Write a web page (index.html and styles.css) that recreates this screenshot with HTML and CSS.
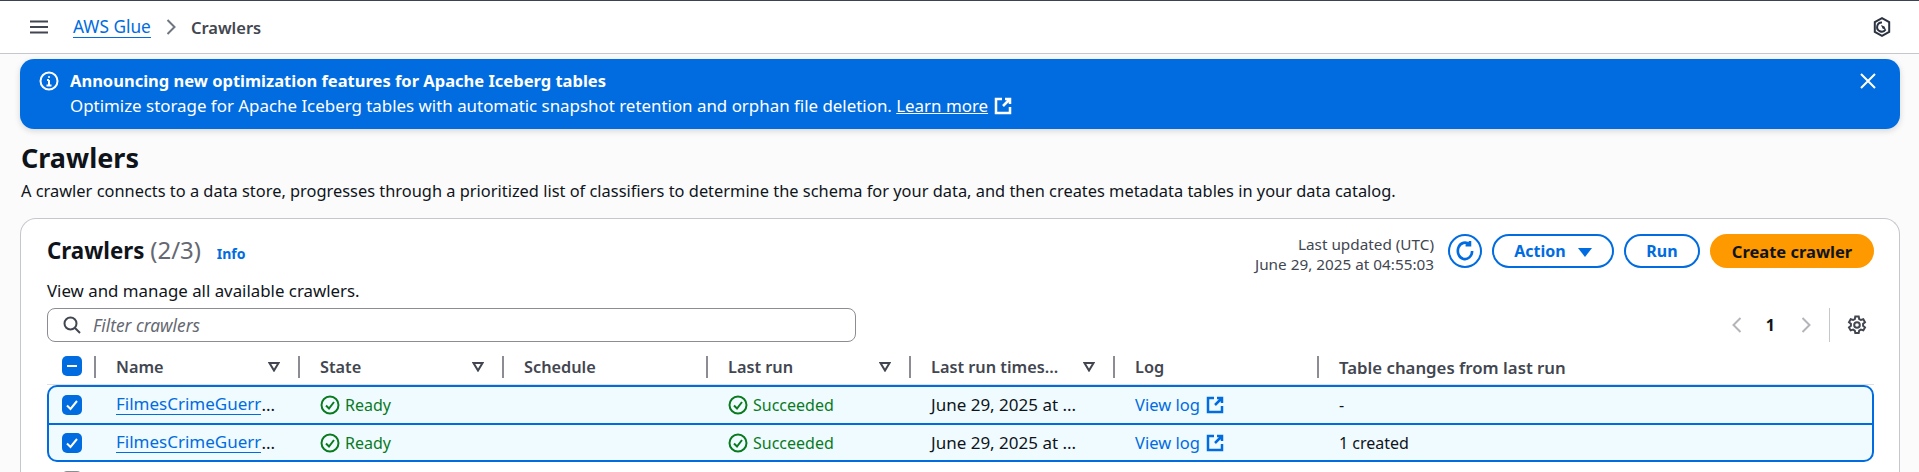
FILE: index.html
```html
<!DOCTYPE html>
<html>
<head>
    <title>Crawlers</title>
    <link rel="stylesheet" href="styles.css">
</head>
<body>
    <header class="topbar">
        <svg class="menu-icon" viewBox="0 0 18 14"><path d="M0 1.5h18M0 7h18M0 12.5h18"/></svg>
        <a class="crumb-link" href="#">AWS Glue</a>
        <svg class="crumb-sep" viewBox="0 0 10 16"><path d="M1.5 1l7 7-7 7"/></svg>
        <span class="crumb-current">Crawlers</span>
        <svg class="hex-icon" viewBox="0 0 18 20">
            <path class="hex-line" d="M9 1.2l7.2 4v9.6L9 18.8l-7.200-4V5.200z"/>
            <path class="hex-line" d="M12.600 12.500A4.600 4.600 0 1 1 9 5.400"/>
            <path class="hex-fill" d="M8 8l3.500 1.500 1.500 3.500-3.500-1.500z"/>
        </svg>
    </header>

    <div class="banner">
        <svg class="info-icon" viewBox="0 0 20 20">
            <circle cx="10" cy="10" r="8.500"/>
            <path d="M10 9v5.500M7.500 14.500h5M8 9h2"/>
            <path d="M10 5.200v1.600"/>
        </svg>
        <div class="banner-text">
            <div class="banner-title">Announcing new optimization features for Apache Iceberg tables</div>
            <div class="banner-body">Optimize storage for Apache Iceberg tables with automatic snapshot retention and orphan file deletion. <a href="#">Learn more</a>
                <svg class="ext-icon ext-white" viewBox="0 0 18 18"><path d="M8 2H2v14h14v-6M11 2h5v5M16 2l-7 7"/></svg>
            </div>
        </div>
        <svg class="close-icon" viewBox="0 0 16 16"><path d="M1 1l14 14M15 1L1 15"/></svg>
    </div>

    <h1 class="page-title">Crawlers</h1>
    <p class="page-desc">A crawler connects to a data store, progresses through a prioritized list of classifiers to determine the schema for your data, and then creates metadata tables in your data catalog.</p>

    <section class="card">
        <div class="card-head">
            <div>
                <h2 class="card-title">Crawlers <span class="count">(2/3)</span> <a class="info-link" href="#">Info</a></h2>
                <div class="card-sub">View and manage all available crawlers.</div>
            </div>
            <div class="actions">
                <div class="updated">Last updated (UTC)<br>June 29, 2025 at 04:55:03</div>
                <button class="btn btn-round" type="button">
                    <svg viewBox="0 0 20 20"><path d="M16.500 10a6.500 7.500 0 1 1-2.500-6M14.500 0.800v4h-4"/></svg>
                </button>
                <button class="btn btn-action" type="button">Action <span class="caret"></span></button>
                <button class="btn btn-run" type="button">Run</button>
                <button class="btn btn-primary" type="button">Create crawler</button>
            </div>
        </div>

        <div class="tools">
            <div class="filter">
                <svg viewBox="0 0 18 18"><circle cx="7.500" cy="7.500" r="6"/><path d="M12 12l5 5"/></svg>
                <span>Filter crawlers</span>
            </div>
            <div class="pager">
                <svg class="pager-arrow" viewBox="0 0 10 16"><path d="M8.500 1l-7 7 7 7"/></svg>
                <span class="page-num">1</span>
                <svg class="pager-arrow" viewBox="0 0 10 16"><path d="M1.500 1l7 7-7 7"/></svg>
                <span class="pager-sep"></span>
                <svg class="gear" viewBox="0 0 20 20">
                    <path d="M8.300 1.500h3.400l.5 2.500 1.700 1 2.400-.8 1.700 3-1.900 1.600v2l1.900 1.600-1.700 3-2.400-.8-1.700 1-.5 2.500H8.300l-.5-2.500-1.700-1-2.400.8-1.700-3 1.900-1.600v-2L2 7.200l1.700-3 2.400.8 1.700-1z"/>
                    <circle cx="10" cy="10" r="2.800"/>
                </svg>
            </div>
        </div>

        <div class="table-head row-grid">
            <div class="cell-check"><span class="check check-on"><svg viewBox="0 0 20 20"><path class="dash" d="M5 10h10"/></svg></span></div>
            <div class="th">Name <svg class="sort" viewBox="0 0 12 10"><path d="M1.500 1h9L6 8.500z"/></svg></div>
            <div class="th">State <svg class="sort" viewBox="0 0 12 10"><path d="M1.500 1h9L6 8.500z"/></svg></div>
            <div class="th">Schedule</div>
            <div class="th">Last run <svg class="sort" viewBox="0 0 12 10"><path d="M1.500 1h9L6 8.500z"/></svg></div>
            <div class="th">Last run times... <svg class="sort" viewBox="0 0 12 10"><path d="M1.500 1h9L6 8.500z"/></svg></div>
            <div class="th">Log</div>
            <div class="th th-wide">Table changes from last run</div>
        </div>

        <div class="selected">
            <div class="row row-grid">
                <div class="cell-check"><span class="check check-on"><svg viewBox="0 0 20 20"><path d="M5 10.500l3.500 3.500L15 6"/></svg></span></div>
                <div class="td td-long"><a class="name-link" href="#">FilmesCrimeGuerr</a>...</div>
                <div class="td ok"><svg class="ok-icon" viewBox="0 0 20 20"><circle cx="10" cy="10" r="8.500"/><path d="M6 10.500l3 3 5-6.500"/></svg>Ready</div>
                <div class="td"></div>
                <div class="td ok"><svg class="ok-icon" viewBox="0 0 20 20"><circle cx="10" cy="10" r="8.500"/><path d="M6 10.500l3 3 5-6.500"/></svg>Succeeded</div>
                <div class="td td-long">June 29, 2025 at ...</div>
                <div class="td td-log"><a class="log-link" href="#">View log</a><svg class="ext-icon" viewBox="0 0 18 18"><path d="M8 2H2v14h14v-6M11 2h5v5M16 2l-7 7"/></svg></div>
                <div class="td">-</div>
            </div>
            <div class="row row-grid row-next">
                <div class="cell-check"><span class="check check-on"><svg viewBox="0 0 20 20"><path d="M5 10.500l3.500 3.500L15 6"/></svg></span></div>
                <div class="td td-long"><a class="name-link" href="#">FilmesCrimeGuerr</a>...</div>
                <div class="td ok"><svg class="ok-icon" viewBox="0 0 20 20"><circle cx="10" cy="10" r="8.500"/><path d="M6 10.500l3 3 5-6.500"/></svg>Ready</div>
                <div class="td"></div>
                <div class="td ok"><svg class="ok-icon" viewBox="0 0 20 20"><circle cx="10" cy="10" r="8.500"/><path d="M6 10.500l3 3 5-6.500"/></svg>Succeeded</div>
                <div class="td td-long">June 29, 2025 at ...</div>
                <div class="td td-log"><a class="log-link" href="#">View log</a><svg class="ext-icon" viewBox="0 0 18 18"><path d="M8 2H2v14h14v-6M11 2h5v5M16 2l-7 7"/></svg></div>
                <div class="td">1 created</div>
            </div>
        </div>
        <div class="row-grid row-off">
            <div class="cell-check"><span class="check"></span></div>
        </div>
    </section>
</body>
</html>
```

FILE: styles.css
```css
html, body {
    height: 100%;
    overflow: hidden;
}
body {
    margin: 0;
    display: flex;
    flex-direction: column;
    background-color: #fbfbfc;
    color: #0f141a;
    font-family: "Noto Sans", sans-serif;
    font-size: 16px;
}
a {
    color: #006ce0;
}
svg {
    fill: none;
    stroke: currentColor;
    stroke-width: 2;
    flex: none;
}

.topbar {
    display: flex;
    flex: none;
    align-items: center;
    height: 52px;
    border-top: 1px solid #3c4350;
    border-bottom: 1px solid #c6c6cd;
    background-color: #fff;
    padding: 0 28px 0 30px;
    color: #424650;
}
.menu-icon {
    width: 18px;
    height: 14px;
    margin-right: 25px;
}
.crumb-link {
    font-size: 17.300px;
    text-decoration: none;
    border-bottom: 1px solid #006ce0;
    line-height: 20px;
}
.crumb-sep {
    width: 10px;
    height: 16px;
    margin: 0 15px 0 15px;
    color: #6f7682;
}
.crumb-current {
    font-size: 16.500px;
    font-weight: 600;
}
.hex-icon {
    width: 18px;
    height: 20px;
    margin-left: auto;
    color: #2c3340;
}
.hex-fill {
    fill: currentColor;
    stroke: none;
}

.banner {
    display: flex;
    flex: none;
    margin: 5px 19px 0 20px;
    height: 70px;
    box-sizing: border-box;
    padding: 9px 24px 0 19px;
    background-color: #006ce0;
    border-radius: 14px;
    box-shadow: 0 2px 6px rgba(0, 7, 22, 0.15);
    color: #fff;
}
.banner a {
    color: #fff;
}
.info-icon {
    width: 20px;
    height: 20px;
    margin: 3px 11px 0 0;
}
.banner-title {
    font-size: 16.500px;
    font-weight: 700;
    line-height: 26px;
}
.banner-body {
    font-size: 16.900px;
    line-height: 24px;
}
.close-icon {
    width: 16px;
    height: 16px;
    margin: 5px 0 0 auto;
}
.ext-icon {
    width: 18px;
    height: 18px;
    margin-left: 6px;
    vertical-align: -3px;
    stroke-width: 2.500;
    color: #006ce0;
}
.ext-white {
    color: #fff;
    margin-left: 2px;
}

.page-title {
    flex: none;
    margin: 12px 0 0 21px;
    font-size: 27px;
    line-height: 34px;
    font-weight: 700;
}
.page-desc {
    flex: none;
    margin: 4px 0 0 21px;
    font-size: 16.400px;
    line-height: 24px;
}

.card {
    flex: 1;
    min-height: 0;
    overflow: hidden;
    margin: 15px 19px 0 20px;
    padding: 16px 25px 0 26px;
    background-color: #fff;
    border: 1px solid #c6c6cd;
    border-bottom: 0;
    border-radius: 16px 16px 0 0;
}
.card-head {
    display: flex;
    justify-content: space-between;
}
.card-title {
    margin: -1px 0 1px;
    font-size: 22.300px;
    line-height: 32px;
    font-weight: 700;
}
.count {
    color: #656871;
    font-size: 24px;
    font-weight: 400;
}
.info-link {
    font-size: 14px;
    font-weight: 700;
    text-decoration: none;
    margin-left: 10px;
}
.card-sub {
    margin-top: 9px;
    font-size: 16.850px;
    line-height: 24px;
}
.actions {
    display: flex;
    align-items: flex-start;
    margin-top: -1px;
}
.updated {
    font-size: 15.300px;
    line-height: 20px;
    text-align: right;
    color: #424650;
    margin: 0 14px 0 0;
}
.btn {
    height: 34px;
    box-sizing: border-box;
    border: 2px solid #006ce0;
    border-radius: 17px;
    background-color: #fff;
    color: #006ce0;
    font-family: inherit;
    font-size: 16px;
    font-weight: 700;
    padding: 0;
    margin-left: 10px;
}
.btn-round {
    width: 34px;
    margin-left: 0;
    display: flex;
    align-items: center;
    justify-content: center;
}
.btn-round svg {
    width: 22px;
    height: 24px;
    stroke-width: 2.400;
}
.btn-action {
    width: 122px;
}
.btn-run {
    width: 76px;
}
.btn-primary {
    width: 164px;
    border-color: #ff9900;
    background-color: #ff9900;
    color: #0f141a;
    font-size: 16.500px;
}
.caret {
    display: inline-block;
    width: 0;
    height: 0;
    margin-left: 8px;
    border-left: 7px solid transparent;
    border-right: 7px solid transparent;
    border-top: 9px solid #006ce0;
}

.tools {
    display: flex;
    justify-content: space-between;
    align-items: center;
    margin-top: 5px;
}
.filter {
    display: flex;
    align-items: center;
    width: 809px;
    height: 34px;
    box-sizing: border-box;
    border: 1px solid #8c8c94;
    border-radius: 8px;
    padding-left: 15px;
    color: #424650;
}
.filter svg {
    width: 18px;
    height: 18px;
    margin-right: 12px;
}
.filter span {
    font-size: 17.300px;
    font-style: italic;
    color: #656871;
}
.pager {
    display: flex;
    align-items: center;
    height: 34px;
    margin-right: 7px;
}
.pager-arrow {
    width: 10px;
    height: 16px;
    color: #b4b4bb;
}
.page-num {
    font-weight: 700;
    margin: 0 26px 0 24px;
}
.pager-sep {
    width: 1px;
    height: 34px;
    background-color: #c6c6cd;
    margin: 0 17px 0 18px;
}
.gear {
    width: 20px;
    height: 20px;
    color: #424650;
}

.row-grid {
    display: grid;
    grid-template-columns: 47px 204px 204px 204px 203px 204px 204px 1fr;
}
.table-head {
    height: 29px;
    margin-top: 14px;
    border-bottom: 1px solid #dedee3;
    box-sizing: border-box;
}
.th {
    display: flex;
    align-items: center;
    height: 22px;
    padding: 0 18px 0 20px;
    border-left: 2px solid #8c8c94;
    box-sizing: border-box;
    font-size: 16.300px;
    font-weight: 600;
    color: #424650;
    white-space: nowrap;
}
.th-wide {
    font-size: 16.800px;
}
.sort {
    margin-left: auto;
    width: 12px;
    height: 10px;
}
.cell-check {
    padding-left: 15px;
}
.check {
    display: block;
    width: 20px;
    height: 20px;
    box-sizing: border-box;
    border: 2px solid #8c8c94;
    border-radius: 5px;
}
.check-on {
    background-color: #006ce0;
    border: 0;
    color: #fff;
}
.check-on svg {
    display: block;
    width: 20px;
    height: 20px;
}
.selected {
    border: 2px solid #006ce0;
    border-radius: 10px;
    background-color: #f0fbff;
    box-sizing: border-box;
    height: 77px;
    overflow: hidden;
}
.row {
    align-items: center;
    box-sizing: border-box;
    height: 36px;
    padding-bottom: 1px;
}
.row-next {
    border-top: 2px solid #006ce0;
    height: 37px;
    padding-bottom: 0;
}
.row-off {
    margin-top: 9px;
}
.row .cell-check {
    padding-left: 13px;
}
.td {
    display: flex;
    align-items: center;
    padding-left: 20px;
    white-space: nowrap;
}
.td-long {
    font-size: 17px;
}
.td-log {
    font-size: 16.500px;
}
.td a {
    text-decoration: none;
}
.td .name-link {
    border-bottom: 1px solid #006ce0;
    line-height: 20px;
}
.ok {
    color: #0a7a1f;
}
.ok-icon {
    width: 20px;
    height: 20px;
    margin-right: 5px;
}
```
